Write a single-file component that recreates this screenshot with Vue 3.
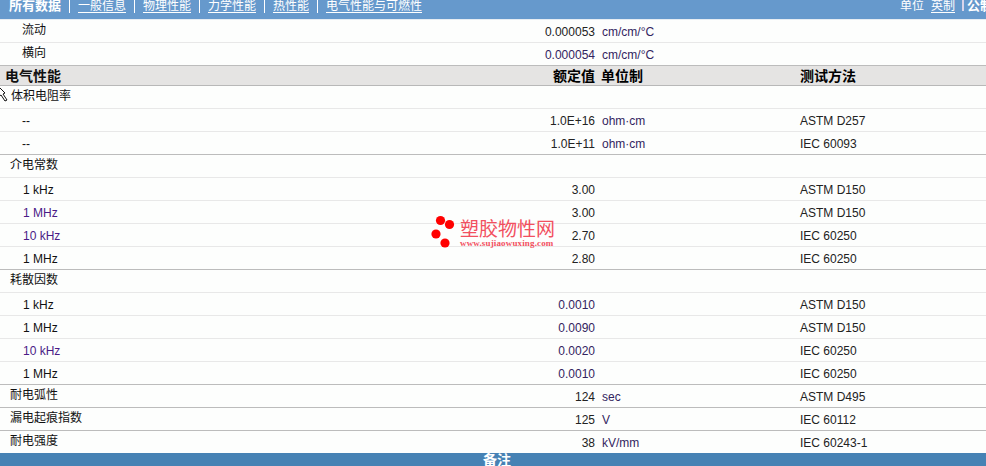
<script setup>
const rows = [
  { name: '流动', indent: 'i2', val: '0.000053', unit: 'cm/cm/°C', method: '' },
  { name: '横向', indent: 'i2', val: '0.000054', unit: 'cm/cm/°C', method: '', line: 'dark', vp: true },
  { head: true },
  { name: '体积电阻率', indent: 'i1 wide' },
  { name: '--', indent: 'i2 low', val: '1.0E+16', unit: 'ohm·cm', method: 'ASTM D257' },
  { name: '--', indent: 'i2 low', val: '1.0E+11', unit: 'ohm·cm', method: 'IEC 60093', line: 'dark' },
  { name: '介电常数', indent: 'i1' },
  { name: '1 kHz', indent: 'i3', val: '3.00', method: 'ASTM D150' },
  { name: '1 MHz', indent: 'i3', val: '3.00', method: 'ASTM D150', np: true },
  { name: '10 kHz', indent: 'i3', val: '2.70', method: 'IEC 60250', np: true },
  { name: '1 MHz', indent: 'i3', val: '2.80', method: 'IEC 60250', line: 'dark' },
  { name: '耗散因数', indent: 'i1' },
  { name: '1 kHz', indent: 'i3', val: '0.0010', method: 'ASTM D150', vp: true },
  { name: '1 MHz', indent: 'i3', val: '0.0090', method: 'ASTM D150', vp: true },
  { name: '10 kHz', indent: 'i3', val: '0.0020', method: 'IEC 60250', np: true, vp: true },
  { name: '1 MHz', indent: 'i3', val: '0.0010', method: 'IEC 60250', line: 'dark', vp: true },
  { name: '耐电弧性', indent: 'i1', val: '124', unit: 'sec', method: 'ASTM D495', line: 'dark' },
  { name: '漏电起痕指数', indent: 'i1', val: '125', unit: 'V', method: 'IEC 60112', line: 'dark' },
  { name: '耐电强度', indent: 'i1', val: '38', unit: 'kV/mm', method: 'IEC 60243-1', line: 'none' }
]
const links = ['一般信息', '物理性能', '力学性能', '热性能', '电气性能与可燃性']
</script>

<template>
  <div class="page">
    <nav class="top">
      <b class="all">所有数据</b>
      <template v-for="l in links" :key="l">
        <i class="sep"></i>
        <a class="link">{{ l }}</a>
      </template>
      <div class="units">
        <span>单位</span>
        <a class="link">英制</a>
        <i class="sep unit-sep"></i>
        <b class="metric">公制</b>
      </div>
    </nav>

    <div class="table">
      <template v-for="(r, i) in rows" :key="i">
        <div v-if="r.head" class="row head">
          <div class="name">电气性能</div>
          <div class="val">额定值</div>
          <div class="unit">单位制</div>
          <div class="method">测试方法</div>
        </div>
        <div v-else class="row" :class="r.line">
          <div class="name" :class="[r.indent, { purple: r.np }]">{{ r.name }}</div>
          <div class="val" :class="{ purple: r.vp }">{{ r.val }}</div>
          <div class="unit">{{ r.unit }}</div>
          <div class="method">{{ r.method }}</div>
        </div>
      </template>
    </div>

    <footer class="notes">备注</footer>

    <svg class="cursor" width="8" height="18" viewBox="0 0 8 18">
      <path d="M-2 1 L5 8 L3 9 L7 15 L5 16 L1 10 L-2 12 Z" fill="#fff" stroke="#111" stroke-width="1" />
    </svg>

    <div class="mark">
      <svg class="dots" width="26" height="36" viewBox="0 0 26 36">
        <circle cx="9.5" cy="5.5" r="4.6" />
        <circle cx="18.5" cy="9.5" r="4.6" />
        <circle cx="5" cy="19" r="4.6" />
        <circle cx="14" cy="28" r="4.6" />
      </svg>
      <div class="mark-text">
        <div class="cn">塑胶物性网</div>
        <div class="url">www.sujiaowuxing.com</div>
      </div>
    </div>
  </div>
</template>

<style scoped>
.page {
  position: relative;
  width: 986px;
  height: 466px;
  overflow: hidden;
  background: #fdfefd;
  font: 12px/1 "Liberation Sans", "Noto Sans CJK SC", sans-serif;
  color: #222;
}
.top {
  display: flex;
  gap: 8px;
  height: 19px;
  padding-left: 9px;
  background: #6699cc;
  border-bottom: 1px solid #e6ecf2;
  color: #fff;
  line-height: 12px;
  overflow: hidden;
  white-space: nowrap;
}
.all { font-size: 13px; line-height: 12px; }
.sep { display: block; flex: none; width: 1px; height: 13px; background: #fff; }
.link { flex: none; height: 13px; border-bottom: 1px solid #fff; box-sizing: border-box; }
.units {
  position: absolute;
  left: 900px;
  top: 0;
  display: flex;
  gap: 7px;
  width: 86px;
  overflow: hidden;
}
.units span { flex: none; }
.unit-sep { width: 2px; height: 11px; background: #d8d4ea; }
.metric { flex: none; font-size: 13px; line-height: 12px; margin-left: -4px; }
.table { display: flex; flex-direction: column; }
.row {
  display: grid;
  grid-template-columns: 320px 275px 198px 1fr;
  height: 23px;
  box-sizing: border-box;
  border-bottom: 1px solid #e8e8e8;
  align-items: center;
  white-space: nowrap;
}
.row.dark { border-bottom-color: #bcbcbc; }
.row.none { border-bottom: 0; height: 22px; }
.row.head {
  height: 20px;
  background: #e5e4e3;
  border-bottom-color: #b8b8b8;
  font-size: 14px;
  font-weight: 700;
  color: #000;
}
.name { padding-bottom: 3px; color: #111; }
.i1 { padding-left: 10px; }
.wide { padding-left: 11px; }
.i2 { padding-left: 22px; }
.low { padding-bottom: 0; padding-top: 1px; }
.i3 { padding-left: 23px; padding-bottom: 0; padding-top: 1px; }
.head .name { padding: 0 0 0 5px; }
.val { text-align: right; }
.unit { padding-left: 7px; color: #33245f; }
.method { padding-left: 7px; }
.row .unit, .row .val, .row .method { padding-top: 1px; }
.row.head .unit, .row.head .val, .row.head .method { padding-top: 0; color: #000; }
.row.head .unit { padding-left: 6px; }
.name.purple { color: #4a1a86; }
.val.purple { color: #33245f; }
.notes {
  height: 13px;
  background: #4682b4;
  color: #fff;
  font-size: 14px;
  font-weight: 700;
  line-height: 15px;
  text-align: center;
  padding-left: 8px;
}
.cursor { position: absolute; left: 0; top: 85px; }
.mark { position: absolute; left: 431px; top: 215px; display: flex; gap: 3px; }
.dots { fill: #f00; display: block; }
.mark-text { padding-top: 6px; color: #f2505f; }
.cn { font-size: 19px; line-height: 18px; white-space: nowrap; }
.url {
  font: 700 9px/9px "Liberation Serif", serif;
  letter-spacing: 0.15px;
  white-space: nowrap;
}
</style>
